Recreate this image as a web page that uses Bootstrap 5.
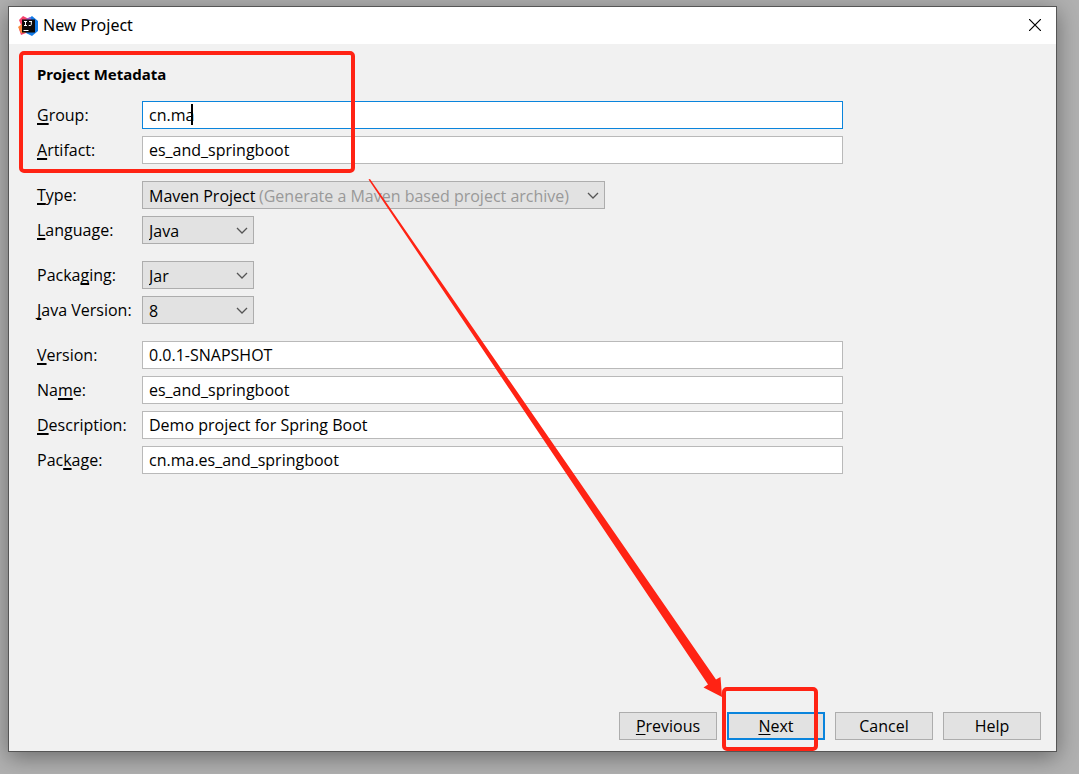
<!DOCTYPE html>
<html lang="en">
<head>
<meta charset="utf-8">
<meta name="viewport" content="width=device-width, initial-scale=1">
<title>New Project</title>
<link href="https://cdn.jsdelivr.net/npm/bootstrap@5.3.0/dist/css/bootstrap.min.css" rel="stylesheet">
<style>
  :root { --mark-red: #ff2314; --focus-blue: #0a84dc; }
  body {
    background: #b1b1b1;
    color: #000;
    font: 16px/20px "Open Sans", "Noto Sans", sans-serif;
    padding: 6px 22px 22px 8px;
  }
  .dialog {
    background: #f1f1f1;
    border: 1px solid #555;
    box-shadow: 0 5px 22px rgba(0, 0, 0, .4);
  }
  .title-bar { height: 37px; padding: 0 13px 0 9px; }
  .title-text { font-family: "Noto Sans", sans-serif; margin-left: 5px; padding-bottom: 2px; }
  .close-btn { width: 16px; height: 16px; margin-bottom: 2px; }
  .dialog-body { padding: 20px 28px 0; }
  .section-title { font-family: "Noto Sans", sans-serif; font-size: 15px; line-height: 20px; margin-bottom: 17px; }
  .project-form { max-width: 806px; }
  .field-row { display: grid; grid-template-columns: 105px minmax(0, 1fr); height: 28px; margin-bottom: 7px; align-items: center; }
  .field-row label { padding-bottom: 1px; }
  .group-start { margin-top: 17px; }
  u { text-underline-offset: 2px; text-decoration-thickness: 2px; text-decoration-skip-ink: none; }
  .form-control, .form-select {
    height: 28px;
    padding: 0 6px;
    border: 1px solid #b9b9b9;
    border-radius: 0;
    color: #000;
    font-size: 16px;
    line-height: 26px;
  }
  .form-control { padding-bottom: 1px; }
  .form-control:focus, .form-control.is-current { border-color: var(--focus-blue); box-shadow: none; }
  .form-select { background-color: #e2e2e2; border-color: #adadad; background-image: none; padding-top: 2px; line-height: 24px; }
  .select-wrap { position: relative; width: 112px; }
  .select-wide { width: 463px; max-width: 100%; }
  .select-arrow { position: absolute; right: 6px; top: 11px; pointer-events: none; }
  .select-hint { position: absolute; left: 117px; top: 5px; color: #999; pointer-events: none; }
  .caret { position: absolute; left: 49px; top: 3px; width: 2px; height: 21px; background: #000; }
  .footer-bar { padding: 0 15px 11px; gap: 10px; }
  .footer-bar .btn {
    width: 98px; height: 28px; padding: 0;
    border: 1px solid #adadad; border-radius: 0;
    background: #e2e2e2; color: #000; font-size: 16px; line-height: 24px;
  }
  .footer-bar .btn-default { border: 2px solid var(--focus-blue); }
  .footer-bar u { text-decoration-thickness: 1px; }
  .mark-box { position: absolute; border: 4px solid var(--mark-red); border-radius: 5px; pointer-events: none; }
  .mark-meta { left: -18px; top: -13px; width: 336px; height: 122px; }
  .mark-next { left: -5px; top: -25px; width: 96px; height: 64px; }
  .mark-arrow { position: absolute; inset: 0; width: 100%; height: 100%; pointer-events: none; }
</style>
</head>
<body class="min-vh-100 d-flex">
<main class="dialog position-relative flex-fill d-flex flex-column">
  <header class="title-bar bg-white d-flex align-items-center">
    <svg width="20" height="20" viewBox="0 0 20 20" aria-hidden="true">
      <path d="M1 4 5 0l6 3-3 14-5 2-2-6 2-4z" fill="#f5426c"/>
      <path d="M0 11l4-3 3 9-4 0z" fill="#f98a3c"/>
      <path d="M10 3l4-3 6 5v10l-6 5-6-3z" fill="#127be8"/>
      <path d="M8 3l4-2 2 4H8z" fill="#a05bd0"/>
      <path d="M4 3.500h13v13H4z" fill="#0b0909"/>
      <path d="M6 5.500h3M7.500 5.500v4M6 9.500h3M11 5.500h3M13.300 5.500v3q0 1-1 1h-1.600M5.500 14.500h5" fill="none" stroke="#fff"/>
    </svg>
    <span class="title-text flex-fill">New Project</span>
    <button type="button" class="close-btn border-0 bg-transparent p-0 d-flex align-items-center justify-content-center" aria-label="Close">
      <svg width="12" height="12" viewBox="0 0 12 12"><path d="M0 0 12 12M12 0 0 12" stroke="#000" stroke-width="1.200"/></svg>
    </button>
  </header>

  <div class="dialog-body flex-fill">
    <form class="project-form" id="project-form">
      <div class="position-relative">
        <h1 class="section-title fw-bold">Project Metadata</h1>
        <div class="field-row">
          <label for="group"><u>G</u>roup:</label>
          <div class="position-relative">
            <input class="form-control is-current" id="group" value="cn.ma">
            <span class="caret"></span>
          </div>
        </div>
        <div class="field-row">
          <label for="artifact"><u>A</u>rtifact:</label>
          <input class="form-control" id="artifact" value="es_and_springboot">
        </div>
        <div class="mark-box mark-meta"></div>
      </div>

      <div class="field-row group-start">
        <label for="type"><u>T</u>ype:</label>
        <div class="select-wrap select-wide">
          <select class="form-select" id="type"><option>Maven Project</option></select>
          <span class="select-hint">(Generate a Maven based project archive)</span>
          <svg class="select-arrow" width="12" height="8" viewBox="0 0 12 8"><path d="M1 1l5 5 5-5" fill="none" stroke="#555" stroke-width="1.300"/></svg>
        </div>
      </div>
      <div class="field-row">
        <label for="language"><u>L</u>anguage:</label>
        <div class="select-wrap">
          <select class="form-select" id="language"><option>Java</option></select>
          <svg class="select-arrow" width="12" height="8" viewBox="0 0 12 8"><path d="M1 1l5 5 5-5" fill="none" stroke="#555" stroke-width="1.300"/></svg>
        </div>
      </div>

      <div class="field-row group-start">
        <label for="packaging">Packa<u>g</u>ing:</label>
        <div class="select-wrap">
          <select class="form-select" id="packaging"><option>Jar</option></select>
          <svg class="select-arrow" width="12" height="8" viewBox="0 0 12 8"><path d="M1 1l5 5 5-5" fill="none" stroke="#555" stroke-width="1.300"/></svg>
        </div>
      </div>
      <div class="field-row">
        <label for="java-version"><u>J</u>ava Version:</label>
        <div class="select-wrap">
          <select class="form-select" id="java-version"><option>8</option></select>
          <svg class="select-arrow" width="12" height="8" viewBox="0 0 12 8"><path d="M1 1l5 5 5-5" fill="none" stroke="#555" stroke-width="1.300"/></svg>
        </div>
      </div>

      <div class="field-row group-start">
        <label for="version"><u>V</u>ersion:</label>
        <input class="form-control" id="version" value="0.0.1-SNAPSHOT">
      </div>
      <div class="field-row">
        <label for="name">Na<u>m</u>e:</label>
        <input class="form-control" id="name" value="es_and_springboot">
      </div>
      <div class="field-row">
        <label for="description"><u>D</u>escription:</label>
        <input class="form-control" id="description" value="Demo project for Spring Boot">
      </div>
      <div class="field-row">
        <label for="package">Pac<u>k</u>age:</label>
        <input class="form-control" id="package" value="cn.ma.es_and_springboot">
      </div>
    </form>
  </div>

  <footer class="footer-bar d-flex justify-content-end">
    <button type="button" class="btn"><u>P</u>revious</button>
    <div class="position-relative">
      <button type="submit" form="project-form" class="btn btn-default"><u>N</u>ext</button>
      <div class="mark-box mark-next"></div>
    </div>
    <button type="button" class="btn">Cancel</button>
    <button type="button" class="btn">Help</button>
  </footer>

  <svg class="mark-arrow" viewBox="9 7 1047 744" preserveAspectRatio="none" aria-hidden="true">
    <path d="M368.500 179.500 370 179 716 679.500 720.500 677 722 697 703.500 687.500 708 684.500Z" fill="#ff2314"/>
  </svg>
</main>
<script src="https://cdn.jsdelivr.net/npm/bootstrap@5.3.0/dist/js/bootstrap.bundle.min.js"></script>
</body>
</html>
